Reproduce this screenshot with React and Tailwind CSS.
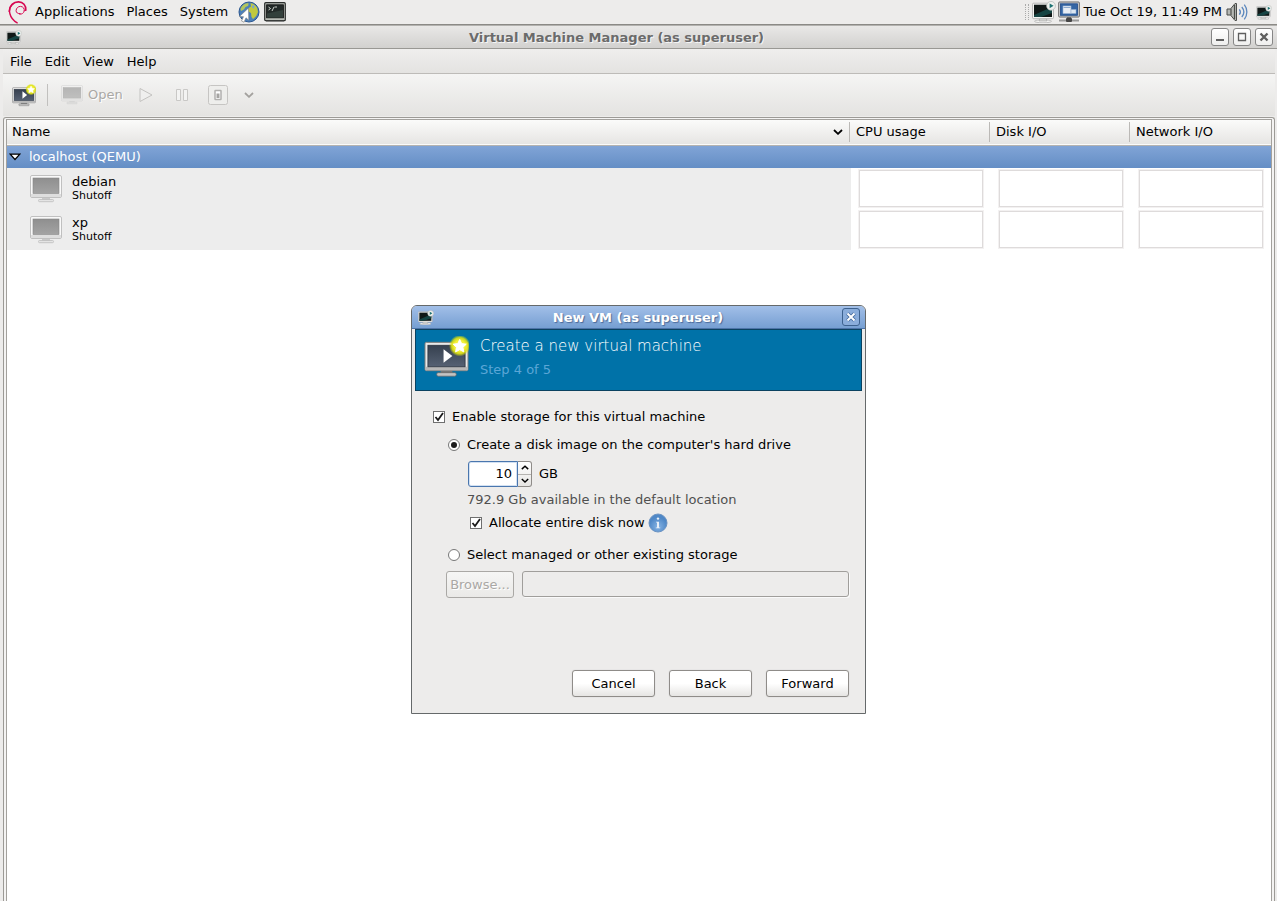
import { useId, useState } from "react";

const SmallMonitor = ({ className }) => (
  <svg viewBox="0 0 24 22" className={className} aria-hidden="true">
    <ellipse cx="11" cy="20.3" rx="8.5" ry="1.5" fill="#f4f4f2" stroke="#aaa" strokeWidth=".7" />
    <path d="M8 17h6l1 3H7z" fill="#d5d5d2" stroke="#999" strokeWidth=".5" />
    <rect x=".5" y="2.2" width="21" height="15.5" rx="1.2" fill="#f4f4f2" stroke="#aaa" strokeWidth=".8" />
    <rect x="2" y="3.7" width="18" height="12.3" fill="#101817" />
    <path d="M2 14 20 6v6L9 16H2z" fill="#164443" />
    <circle cx="19" cy="4.8" r="4.4" fill="#eef0ee" stroke="#b5b9b6" strokeWidth=".7" />
    <path d="M17.6 2.4v4.8l4-2.4z" fill="#1d7272" />
  </svg>
);

const NewVmIcon = ({ className }) => {
  const id = useId();
  return (
    <svg viewBox="0 0 46 42" className={className} aria-hidden="true">
      <defs>
        <radialGradient id={id}>
          <stop offset=".5" stopColor="#f4f03a" />
          <stop offset=".75" stopColor="#dfe312" stopOpacity=".9" />
          <stop offset="1" stopColor="#d8e000" stopOpacity="0" />
        </radialGradient>
        <linearGradient id={id + "s"} x1="0" y1="0" x2="0" y2="1">
          <stop offset="0" stopColor="#36404f" />
          <stop offset="1" stopColor="#566173" />
        </linearGradient>
      </defs>
      <path d="M17 34h12v4H17z" fill="#777" />
      <rect x="13" y="37" width="20" height="3.6" rx="1.5" fill="#c3c3c3" stroke="#636363" strokeWidth=".7" />
      <rect x="1" y="6" width="44" height="29" rx="1.5" fill="#e9e9e9" stroke="#777" />
      <path d="M1.5 31h43v3.5h-43z" fill="#b7b7b7" />
      <rect x="4" y="9" width="38" height="22" fill={`url(#${id}s)`} stroke="#28303c" strokeWidth=".8" />
      <path d="M20 13v14l9-7z" fill="#fff" />
      <circle cx="36.5" cy="9.5" r="11" fill={`url(#${id})`} />
      <path
        d="m36.5 3 2 4.3 4.7.6-3.4 3.2.9 4.7-4.2-2.3-4.2 2.3.9-4.7-3.4-3.2 4.7-.6z"
        fill="#fff"
        stroke="#fff"
        strokeLinejoin="round"
      />
    </svg>
  );
};

const GreyMonitor = ({ className }) => {
  const id = useId();
  return (
    <svg viewBox="0 0 32 28" className={className} aria-hidden="true">
      <linearGradient id={id} x1="0" y1="0" x2="0" y2="1">
        <stop offset="0" stopColor="#8f8f8f" />
        <stop offset="1" stopColor="#a3a3a3" />
      </linearGradient>
      <path d="M12 23h8v2h-8z" fill="#c9c9c9" />
      <rect x="8.5" y="24.5" width="15" height="2.2" rx="1" fill="#e4e4e4" stroke="#bcbcbc" strokeWidth=".8" />
      <rect x=".5" y=".5" width="31" height="22" rx="1.5" fill="#f9f9f9" stroke="#c0c0c0" />
      <path d="M1 19h30v3H1z" fill="#dedede" />
      <rect x="3" y="3" width="26" height="15.5" fill={`url(#${id})`} stroke="#858585" strokeWidth=".6" />
    </svg>
  );
};

const DebianSwirl = () => (
  <svg viewBox="0 0 20 24" className="h-6 w-5" fill="none" stroke="#d70751" strokeLinecap="round" aria-hidden="true">
    <path d="M12.2 13.6c-2.4.4-4.2-1-4.1-3.1.1-2.3 2-4.2 4.4-4.1 2.6.1 4.2 2.2 3.8 4.5" />
    <path d="M16.3 10.8c-.4 2.4-2.6 3.9-4.8 3.4" strokeWidth=".9" />
    <path d="M17.8 10.2C18.2 5.5 15 1.9 10.6 1.8 5.6 1.7 1.4 5.6 1.3 11.3" strokeWidth="1.7" />
    <path d="M5.6 3.5C2.5 5.4.8 9.6 1.9 13.8c.9 3.7 3.6 7 7.3 9" strokeWidth="1.4" />
  </svg>
);

const GlobeIcon = () => (
  <svg viewBox="0 0 22 22" className="h-[22px] w-[22px]" aria-hidden="true">
    <circle cx="11" cy="11" r="10" fill="#4c80ba" stroke="#2c5790" />
    <path d="M2.5 8a9 9 0 0 1 8-6c-.5 1.2.5 2-.5 3L7.5 6 6 8.5 3 10z" fill="#b4c55a" />
    <path d="M12.5 2.3c3 .3 5.2 2 6.7 4.7l.8 4-1.8 4-3.2 3-1.5-2-.5-4-2.5-1.5-.5-3 3-2z" fill="#c0c93f" />
    <path d="M14 4.5h2.5L16 7.500l-2-1z" fill="#7ba5d2" />
    <path d="m10.5 7-9 8.5 4 .2L3.5 20 6 21.2l2-4.4 2.8 2.5z" fill="#fff" stroke="#777" strokeWidth=".6" />
  </svg>
);

const TerminalIcon = () => (
  <svg viewBox="0 0 22 20" className="h-5 w-[22px]" aria-hidden="true">
    <rect x=".7" y=".7" width="20.6" height="18" rx="1" fill="#b9bdb6" stroke="#2b2e2c" strokeWidth="1.2" />
    <rect x="2.6" y="2.8" width="16.8" height="13" fill="#232a28" stroke="#111" strokeWidth=".8" />
    <path d="M3 11.5 19 8v7.5H3z" fill="#33403b" />
    <path d="m4.5 5 2 1.5-2 1.5M8 9l2-4M10.5 5H13" stroke="#dfe3dd" fill="none" strokeWidth=".9" />
    <path d="M2 19.3h18" stroke="#777" />
  </svg>
);

const NetworkIcon = () => (
  <svg viewBox="0 0 22 22" className="h-[22px] w-[22px]" aria-hidden="true">
    <path d="M1 19.5h20" stroke="#999" strokeWidth="2" />
    <path d="M9 15h4v5H9z" fill="#666" />
    <rect x="8" y="17" width="6" height="4" rx="1" fill="#454545" />
    <rect x=".7" y="1" width="20.6" height="15" rx=".8" fill="#d6d9dc" stroke="#666" />
    <rect x="2.5" y="2.8" width="17" height="11.5" fill="#3465a4" stroke="#204a87" strokeWidth=".8" />
    <rect x="5" y="5" width="8" height="7.5" fill="#e8eef5" stroke="#9db5d3" strokeWidth=".6" />
    <path d="M5.5 6.5h7" stroke="#8da9cc" />
    <rect x="13" y="8.5" width="5" height="4" fill="#dce7f2" stroke="#8da9cc" strokeWidth=".5" />
  </svg>
);

const SpeakerIcon = () => (
  <svg viewBox="0 0 22 20" className="h-5 w-[22px]" fill="none" aria-hidden="true">
    <path d="M1 7h3.5L9 1.5h1.5v17H9L4.5 13H1z" fill="#b6b8b4" stroke="#4b4d4a" />
    <path d="M5 7v6M8.5 3v14" stroke="#4b4d4a" strokeWidth="1.2" />
    <path
      d="M13.3 7.3c1.3 1.6 1.3 3.8 0 5.4M15.8 5c2.5 3 2.5 7 0 10M18.3 2.7c3.4 4.2 3.4 10.4 0 14.6"
      stroke="#5d88bd"
      strokeWidth="1.3"
    />
  </svg>
);

const InfoIcon = () => {
  const id = useId();
  return (
    <svg viewBox="0 0 20 20" className="h-5 w-5" aria-hidden="true">
      <radialGradient id={id} cy=".7">
        <stop offset="0" stopColor="#86b3e3" />
        <stop offset="1" stopColor="#4f88c7" />
      </radialGradient>
      <circle cx="10" cy="10" r="9" fill={`url(#${id})`} stroke="#6b93c2" />
      <circle cx="10" cy="5.6" r="1.2" fill="#e8f0f9" />
      <path d="M8 8.7h3v5.7h1.2v.9H7.8v-.9H9V9.600H8z" fill="#e8f0f9" />
    </svg>
  );
};

const Chevron = ({ up, className }) => (
  <svg viewBox="0 0 10 6" className={className} fill="none" stroke="currentColor" strokeWidth="1.8" aria-hidden="true">
    <path d={up ? "M1 5 5 1.5 9 5" : "M1 1 5 4.8 9 1"} />
  </svg>
);

const CheckBox = ({ label, checked, onChange, children }) => (
  <div className="flex h-5 items-center">
    <label className="flex items-center gap-[7px]">
      <span className="grid">
        <input
          type="checkbox"
          checked={checked}
          onChange={(e) => onChange(e.target.checked)}
          className="col-start-1 row-start-1 h-3 w-3 appearance-none border border-[#6f6f6f] bg-white"
        />
        {checked && (
          <svg
            viewBox="0 0 12 12"
            className="pointer-events-none col-start-1 row-start-1 h-3 w-3"
            fill="none"
            stroke="#1a1a1a"
            strokeWidth="1.8"
          >
            <path d="m2.5 6 2.5 3 5-7" />
          </svg>
        )}
      </span>
      {label}
    </label>
    {children}
  </div>
);

const Radio = ({ label, checked, onChange }) => (
  <label className="flex h-5 items-center gap-[7px]">
    <input
      type="radio"
      name="storage"
      checked={checked}
      onChange={onChange}
      className="grid h-3 w-3 appearance-none place-items-center rounded-full border border-[#777] bg-white checked:before:h-1.5 checked:before:w-1.5 checked:before:rounded-full checked:before:bg-[#1c1c1c]"
    />
    {label}
  </label>
);

const DialogButton = ({ children }) => (
  <button
    type="button"
    className="h-[27px] w-[83px] rounded-[3px] border border-[#8f8c89] bg-linear-to-b from-white from-50% to-[#e6e5e3] shadow-[0_0_1px_#bbb]"
  >
    {children}
  </button>
);

const TitleButton = ({ label, children }) => (
  <button
    type="button"
    aria-label={label}
    className="grid h-[18px] w-[18px] place-items-center rounded-[3px] border border-[#868686] bg-linear-to-b from-white to-[#efefee]"
  >
    <svg viewBox="0 0 10 10" className="h-2.5 w-2.5" fill="none" stroke="#5f5f5f">
      {children}
    </svg>
  </button>
);

const TopPanel = () => (
  <header className="flex h-[25px] items-center border-b border-[#8b8a86] bg-[#edeceb] pr-[5px] pl-2">
    <DebianSwirl />
    <nav className="ml-[7px] flex items-center gap-3">
      <button type="button">Applications</button>
      <button type="button">Places</button>
      <button type="button">System</button>
    </nav>
    <div className="ml-2.5 flex items-center gap-1">
      <GlobeIcon />
      <TerminalIcon />
    </div>
    <div className="ml-auto flex items-center">
      <span className="mr-[3px] h-4 w-1 border-x border-dotted border-[#aaa]" />
      <SmallMonitor className="mr-0.5 h-[22px] w-6" />
      <NetworkIcon />
      <span className="mx-1">Tue Oct 19, 11:49 PM</span>
      <SpeakerIcon />
      <SmallMonitor className="ml-2 h-[15px] w-4" />
    </div>
  </header>
);

const Toolbar = () => (
  <div className="flex h-[42px] items-center bg-linear-to-b from-[#f5f5f4] to-[#e4e3e1] pl-[9px] text-[#aaa8a5]">
    <button type="button" aria-label="Create a new virtual machine">
      <NewVmIcon className="h-[23px] w-6" />
    </button>
    <span className="mr-[13px] ml-[11px] h-[22px] border-l border-[#c1c0be]" />
    <button type="button" disabled className="flex items-center gap-[5px]">
      <GreyMonitor className="h-5 w-[22px] opacity-60" />
      <span className="[text-shadow:1px_1px_#fff]">Open</span>
    </button>
    <button type="button" disabled aria-label="Run" className="ml-4">
      <svg viewBox="0 0 14 16" className="h-4 w-3.5" fill="#efefee" stroke="#c3c2c0">
        <path d="M1 1.5v13L13 8z" />
      </svg>
    </button>
    <button type="button" disabled aria-label="Pause" className="ml-[22px]">
      <svg viewBox="0 0 14 14" className="h-3.5 w-3.5" fill="#f3f3f2" stroke="#c9c8c6">
        <path d="M1.5 1.5h4v11h-4zM8.5 1.5h4v11h-4z" />
      </svg>
    </button>
    <button type="button" disabled aria-label="Shut down" className="ml-[19px]">
      <svg viewBox="0 0 20 20" className="h-5 w-5" fill="#eeeeec" stroke="#c6c5c3">
        <rect x=".5" y=".5" width="19" height="19" rx="2" />
        <rect x="7" y="5.5" width="6" height="9" rx=".5" fill="#fff" stroke="#b1b0ae" strokeWidth="1.5" />
        <path d="M8.5 8.5h3V13h-3z" fill="#a5a4a2" stroke="none" />
      </svg>
    </button>
    <button type="button" disabled aria-label="Shut down menu" className="ml-4">
      <Chevron className="h-1.5 w-2.5 text-[#a3a19e]" />
    </button>
  </div>
);

const columns = ["CPU usage", "Disk I/O", "Network I/O"];
const machines = [
  { name: "debian", status: "Shutoff" },
  { name: "xp", status: "Shutoff" },
];

const MachineList = () => (
  <div className="mt-px flex-1 rounded-t-[3px] border border-b-0 border-[#9c9a96] bg-[#f4f3f2] px-0.5 pt-px">
    <div className="h-full border border-b-0 border-[#a3a19d] bg-white">
      <table className="w-full table-fixed border-collapse text-left">
        <colgroup>
          <col />
          <col className="w-[140px]" />
          <col className="w-[140px]" />
          <col className="w-[140px]" />
        </colgroup>
        <thead>
          <tr className="h-[25px] border-b border-[#b5b3b0] bg-linear-to-b from-[#fbfbfa] to-[#e6e5e3]">
            <th className="p-0 font-normal">
              <span className="mr-px flex h-5 items-center justify-between border-r border-[#bbb9b6] pr-1.5 pl-[5px]">
                Name
                <Chevron className="h-1.5 w-2.5" />
              </span>
            </th>
            {columns.map((column) => (
              <th key={column} className="p-0 font-normal">
                <span
                  className={`mr-px flex h-5 items-center border-[#bbb9b6] pl-[5px] ${
                    column === "Network I/O" ? "" : "border-r"
                  }`}
                >
                  {column}
                </span>
              </th>
            ))}
          </tr>
        </thead>
        <tbody>
          <tr className="h-[23px] bg-linear-to-b from-[#82a5d7] to-[#648ec5] text-white">
            <td colSpan={4} className="p-0">
              <div className="flex items-center gap-2 pl-0.5">
                <svg viewBox="0 0 12 8" className="h-2 w-3" fill="#fff" stroke="#000" strokeWidth="1.2">
                  <path d="M1.2 1.2h9.6L6 6.5z" />
                </svg>
                localhost (QEMU)
              </div>
            </td>
          </tr>
          {machines.map((machine) => (
            <tr key={machine.name} className="h-[41px]">
              <td className="bg-[#ededed] p-0">
                <div className="flex items-center gap-2.5 pl-[23px]">
                  <GreyMonitor className="h-7 w-8" />
                  <div>
                    <div className="leading-[14px]">{machine.name}</div>
                    <div className="text-[11px] leading-[14px]">{machine.status}</div>
                  </div>
                </div>
              </td>
              {columns.map((column) => (
                <td key={column} className="p-0">
                  <div className="mx-2 h-[37px] border border-[#dedbdb] shadow-[0_0_0_1px_#f3f1f1]" />
                </td>
              ))}
            </tr>
          ))}
        </tbody>
      </table>
    </div>
  </div>
);

const NewVmDialog = () => {
  const [enabled, setEnabled] = useState(true);
  const [storage, setStorage] = useState("create");
  const [size, setSize] = useState(10);
  const [allocate, setAllocate] = useState(true);

  return (
    <div
      role="dialog"
      aria-label="New VM"
      className="flex w-[455px] flex-col rounded-t-[6px] border border-[#65696a] bg-[#edeceb]"
    >
      <div className="flex h-[23px] items-center rounded-t-[5px] border-b border-[#4d74a8] bg-linear-to-b from-[#a2bfe8] to-[#769fd2] pr-[5px] pl-1.5">
        <SmallMonitor className="h-[15px] w-4" />
        <h2 className="flex-1 pt-0.5 text-center font-bold text-white [text-shadow:1px_1px_1px_#4a6a99]">
          New VM (as superuser)
        </h2>
        <button
          type="button"
          aria-label="Close"
          className="grid h-[18px] w-[18px] place-items-center rounded-[3px] border border-[#3d628f] bg-[#8aaddb]"
        >
          <svg viewBox="0 0 10 10" className="h-2.5 w-2.5">
            <path d="m1.5 1.5 7 7m0-7-7 7" stroke="#466c9e" strokeWidth="3.8" />
            <path d="m1.5 1.5 7 7m0-7-7 7" stroke="#fff" strokeWidth="2" />
          </svg>
        </button>
      </div>

      <div className="mx-[3px] flex h-[62px] gap-[11px] border border-[#0b4260] bg-[#0072a8] pt-1.5 pl-2">
        <NewVmIcon className="h-[42px] w-[45px]" />
        <div>
          <h3 className="font-['DejaVu_Sans_Light','DejaVu_Sans',sans-serif] text-[15px] leading-[20px] font-extralight text-white">
            Create a new virtual machine
          </h3>
          <p className="mt-1 text-[#5ba6d6]">Step 4 of 5</p>
        </div>
      </div>

      <form className="pt-4 pr-4 pb-4 pl-[21px]" onSubmit={(e) => e.preventDefault()}>
        <CheckBox label="Enable storage for this virtual machine" checked={enabled} onChange={setEnabled} />
        <div className="mt-2 pl-[15px]">
          <Radio
            label="Create a disk image on the computer's hard drive"
            checked={storage === "create"}
            onChange={() => setStorage("create")}
          />
          <div className="mt-1.5 flex items-center gap-[7px] pl-5">
            <div className="flex h-[26px]">
              <input
                id="size"
                type="number"
                value={size}
                onChange={(e) => setSize(Number(e.target.value))}
                className="w-[50px] appearance-none rounded-l-[3px] border border-[#4a76ae] bg-white pr-[5px] text-right shadow-[inset_0_0_0_1px_#d3e1f2] [-moz-appearance:textfield] [&::-webkit-inner-spin-button]:appearance-none"
              />
              <div className="flex w-3.5 flex-col rounded-r-[3px] border border-l-0 border-[#8f8c89] bg-linear-to-b from-white to-[#e6e5e3]">
                <button
                  type="button"
                  aria-label="Increase"
                  onClick={() => setSize(size + 1)}
                  className="grid flex-1 place-items-center border-b border-[#b5b3b0]"
                >
                  <Chevron up className="h-[5px] w-2" />
                </button>
                <button
                  type="button"
                  aria-label="Decrease"
                  onClick={() => setSize(size - 1)}
                  className="grid flex-1 place-items-center"
                >
                  <Chevron className="h-[5px] w-2" />
                </button>
              </div>
            </div>
            <label htmlFor="size">GB</label>
          </div>
          <p className="mt-[3px] pl-[19px] text-[#505050]">792.9 Gb available in the default location</p>
          <div className="mt-[3px] pl-[22px]">
            <CheckBox label="Allocate entire disk now" checked={allocate} onChange={setAllocate}>
              <span className="ml-[3px]">
                <InfoIcon />
              </span>
            </CheckBox>
          </div>
          <div className="mt-3">
            <Radio
              label="Select managed or other existing storage"
              checked={storage === "existing"}
              onChange={() => setStorage("existing")}
            />
          </div>
        </div>
        <div className="mt-1.5 flex gap-2 pl-[13px]">
          <button
            type="button"
            disabled
            className="h-[27px] w-[68px] rounded-[3px] border border-[#aaa8a5] bg-linear-to-b from-[#f6f6f5] to-[#eae9e7] text-[#aaa8a5] [text-shadow:1px_1px_#fff]"
          >
            Browse...
          </button>
          <input
            type="text"
            disabled
            aria-label="Storage path"
            className="h-[26px] min-w-0 flex-1 rounded-[3px] border border-[#a09e9b] bg-[#edeceb] shadow-[1px_1px_#fafafa]"
          />
        </div>
        <div className="mt-[72px] flex justify-end gap-[14px]">
          <DialogButton>Cancel</DialogButton>
          <DialogButton>Back</DialogButton>
          <DialogButton>Forward</DialogButton>
        </div>
      </form>
    </div>
  );
};

const App = () => {
  return (
    <div className="relative flex h-screen flex-col overflow-hidden bg-[#edeceb] font-['DejaVu_Sans',sans-serif] text-[13px] leading-[20px] text-black">
      <TopPanel />

      <main className="flex flex-1 flex-col">
        <div className="flex h-6 items-center gap-1 border-t border-b border-t-[#b3b2af] border-b-[#999894] bg-linear-to-b from-[#e9e8e7] to-[#d2d1cf] pr-1 pl-1.5">
          <SmallMonitor className="h-[15px] w-4" />
          <h1 className="flex-1 pt-0.5 text-center font-bold text-[#6b6b6b] [text-shadow:1px_1px_#f5f5f5]">
            Virtual Machine Manager (as superuser)
          </h1>
          <TitleButton label="Minimize">
            <path d="M1 8h8" strokeWidth="2" />
          </TitleButton>
          <TitleButton label="Maximize">
            <path d="M1.5 1.5h7v7h-7z" strokeWidth="1.3" />
          </TitleButton>
          <TitleButton label="Close">
            <path d="m1.5 1.5 7 7m0-7-7 7" strokeWidth="2.4" />
          </TitleButton>
        </div>

        <div className="mr-0.5 ml-[3px] flex flex-1 flex-col">
          <nav className="flex h-[25px] items-center gap-[13px] border-b border-[#bdbbb8] bg-linear-to-b from-[#efeeed] to-[#e4e3e1] pt-0.5 pl-[7px]">
            <button type="button">File</button>
            <button type="button">Edit</button>
            <button type="button">View</button>
            <button type="button">Help</button>
          </nav>
          <Toolbar />
          <MachineList />
        </div>
      </main>

      {/* New VM wizard window */}
      <div className="absolute inset-x-0 top-[305px] flex justify-center">
        <NewVmDialog />
      </div>
    </div>
  );
};

export default App;
